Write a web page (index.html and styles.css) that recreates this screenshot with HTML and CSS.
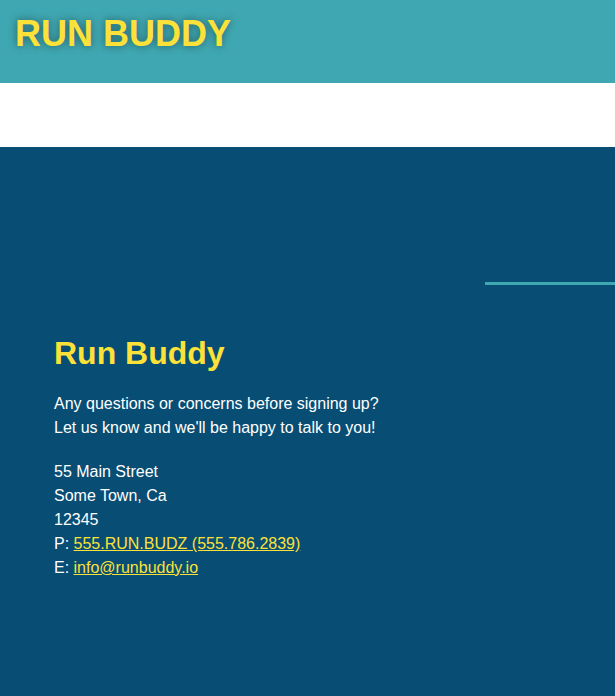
FILE: index.html
```html
<!DOCTYPE html>
<html lang="en">
<head>
<meta charset="utf-8">
<title>Run Buddy</title>
<link rel="stylesheet" href="styles.css">
</head>
<body>
<header class="site-header">
  <h1 class="logo">RUN BUDDY</h1>
</header>
<nav class="nav-bar"></nav>
<section class="contact">
  <div class="divider-row"><hr class="divider"></div>
  <div class="contact-info">
    <h2 class="contact-title">Run Buddy</h2>
    <p class="contact-lead">Any questions or concerns before signing up?<br>Let us know and we'll be happy to talk to you!</p>
    <address class="contact-address">
      55 Main Street<br>
      Some Town, Ca<br>
      12345<br>
      P: <a href="#">555.RUN.BUDZ (555.786.2839)</a><br>
      E: <a href="#">info@runbuddy.io</a>
    </address>
  </div>
</section>
</body>
</html>
```
FILE: styles.css
```css
* { box-sizing: border-box; }
html, body { margin: 0; padding: 0; }
body {
  font-family: "Liberation Sans", Arial, Helvetica, sans-serif;
  background: #024e76;
}
.site-header {
  background: #3fa7b1;
  height: 83px;
  padding: 13px 15px 0;
}
.logo {
  margin: 0;
  font-size: 36px;
  line-height: 41px;
  font-weight: 700;
  color: #fce138;
  text-shadow: 0 0 8px rgba(0, 0, 0, 0.45);
}
.nav-bar {
  background: #fff;
  height: 64px;
}
.contact {
  background: #084d74;
  min-height: 549px;
  padding-top: 135px;
}
.divider-row {
  display: flex;
  justify-content: flex-end;
}
.divider {
  margin: 0;
  width: 130px;
  height: 3px;
  border: 0;
  background: #3fa7b1;
}
.contact-info {
  padding: 50px 54px 0;
  color: #fff;
}
.contact-title {
  margin: 0;
  font-size: 32px;
  line-height: 37px;
  color: #fce138;
  font-weight: 700;
}
.contact-lead {
  margin: 20px 0 0;
  font-size: 16px;
  line-height: 24px;
}
.contact-address {
  margin-top: 20px;
  font-style: normal;
  font-size: 16px;
  line-height: 24px;
}
.contact-address a {
  color: #fce138;
  text-decoration: underline;
}
```
